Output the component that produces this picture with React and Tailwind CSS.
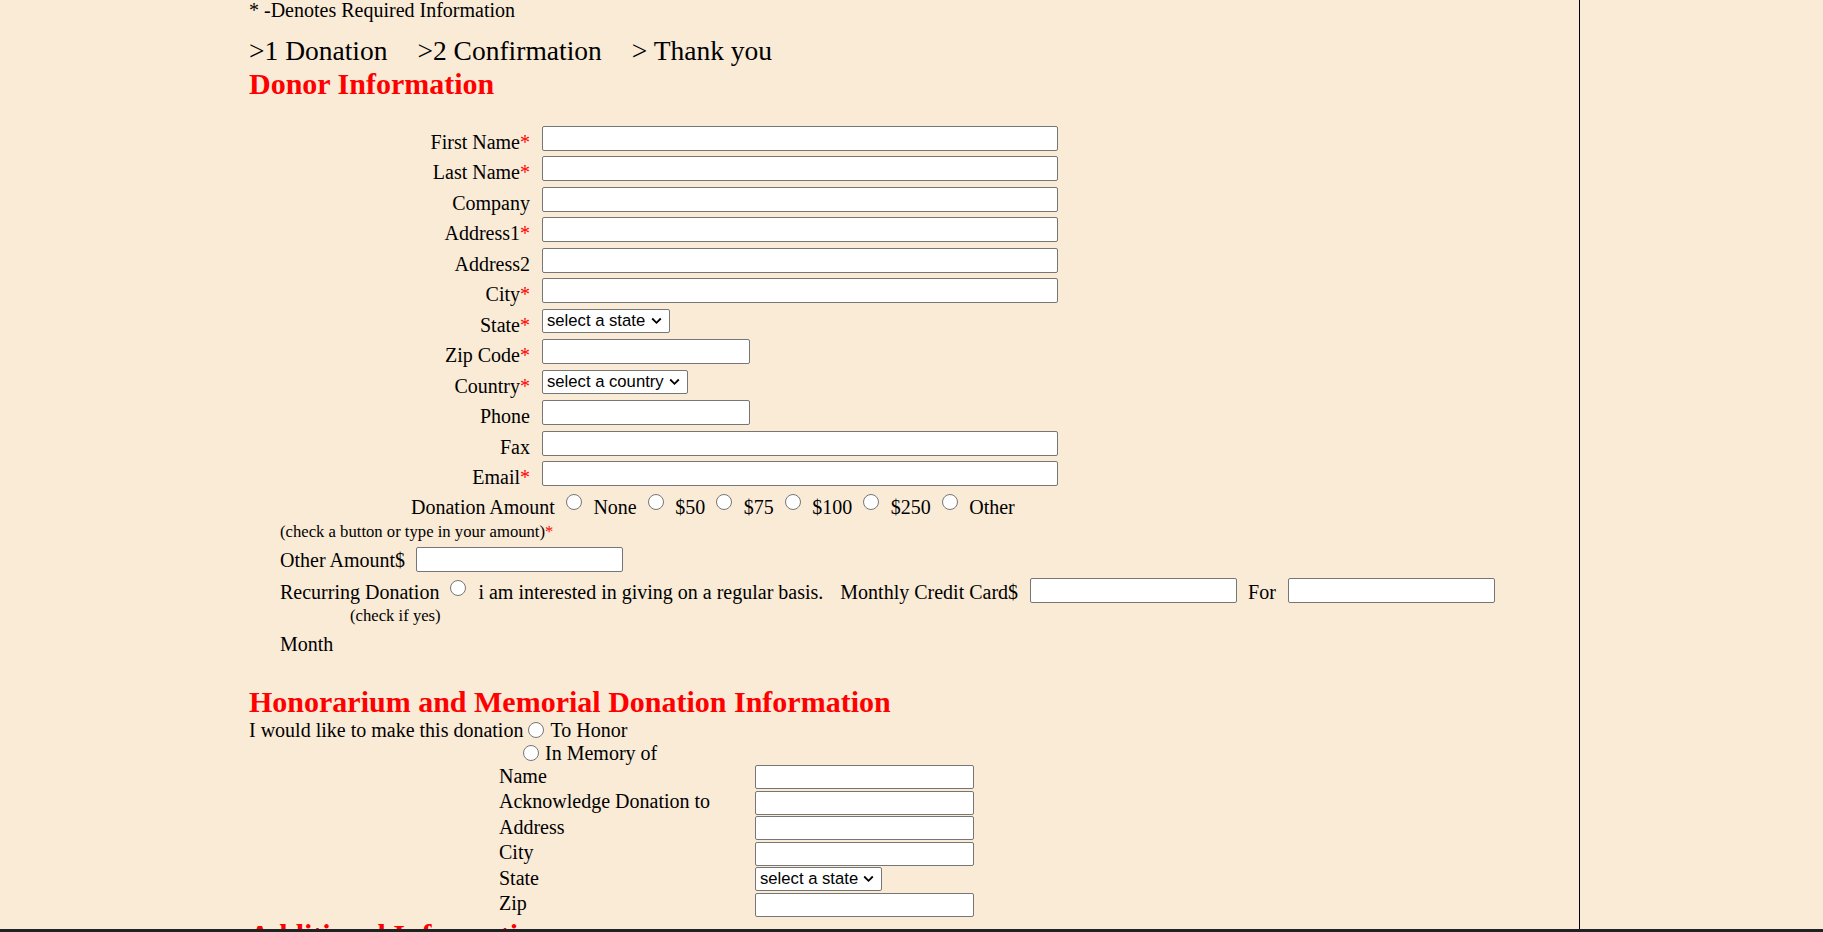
import React from 'react';

const Req = () => <span className="text-[#ff0000]">*</span>;

const Radio = ({ className = '' }) => (
  <span className={`inline-block w-[16px] h-[16px] rounded-full border border-[#767676] bg-white shrink-0 ${className}`} />
);

const TextBox = ({ w, h = 'h-[25px]', className = '' }) => (
  <input type="text" className={`${w} ${h} border border-[#767676] rounded-[2px] bg-white shrink-0 outline-none ${className}`} />
);

const Select = ({ label, w, h = 'h-[24px]' }) => (
  <div className={`${w} ${h} inline-flex items-center justify-between border border-[#767676] rounded-[2px] bg-white pl-[4px] pr-[7px] font-['Liberation_Sans',Arial,sans-serif] text-[16.67px] leading-[20px] text-black shrink-0`}>
    <span>{label}</span>
    <svg width="11" height="8" viewBox="0 0 11 8" className="shrink-0">
      <path d="M1.2 1.5 L5.5 5.8 L9.8 1.5" fill="none" stroke="#000" strokeWidth="1.8" />
    </svg>
  </div>
);

const donorRows = [
  { label: 'First Name', req: true, w: 'w-[516px]' },
  { label: 'Last Name', req: true, w: 'w-[516px]' },
  { label: 'Company', w: 'w-[516px]' },
  { label: 'Address1', req: true, w: 'w-[516px]' },
  { label: 'Address2', w: 'w-[516px]' },
  { label: 'City', req: true, w: 'w-[516px]' },
  { label: 'State', req: true, select: 'select a state', w: 'w-[128px]' },
  { label: 'Zip Code', req: true, w: 'w-[208px]' },
  { label: 'Country', req: true, select: 'select a country', w: 'w-[146px]' },
  { label: 'Phone', w: 'w-[208px]' },
  { label: 'Fax', w: 'w-[516px]' },
  { label: 'Email', req: true, w: 'w-[516px]' },
];

const amounts = ['None', '$50', '$75', '$100', '$250', 'Other'];

const honorRows = [
  { label: 'Name' },
  { label: 'Acknowledge Donation to' },
  { label: 'Address' },
  { label: 'City' },
  { label: 'State', select: 'select a state' },
  { label: 'Zip' },
];

export default function App() {
  return (
    <div className="h-[932px] w-[1823px] overflow-hidden flex flex-col bg-[#faebd7] font-['Liberation_Serif','Times_New_Roman',serif] text-[20px] text-black">
      <div className="flex-1 min-h-0 flex overflow-hidden">
        <div className="w-[1580px] shrink-0 border-r border-black pl-[249px]">
          <div className="leading-[20px]">* -Denotes Required Information</div>
          <div className="mt-[15px] text-[27.5px] leading-[32px] flex whitespace-nowrap">
            <span>&gt;1 Donation</span>
            <span className="ml-[30px]">&gt;2 Confirmation</span>
            <span className="ml-[30px]">&gt; Thank you</span>
          </div>
          <h2 className="text-[30px] leading-[34px] font-bold text-[#ff0000]">Donor Information</h2>

          <div className="mt-[22px] flex flex-col">
            {donorRows.map((r) => (
              <div key={r.label} className="flex items-center h-[30.5px]">
                <div className="w-[281px] text-right leading-[23px] pt-[8px] whitespace-nowrap">
                  {r.label}
                  {r.req && <Req />}
                </div>
                <div className="ml-[12px] flex items-center">
                  {r.select ? <Select label={r.select} w={r.w} /> : <TextBox w={r.w} />}
                </div>
              </div>
            ))}
          </div>

          <div className="mt-[5.5px] pl-[162px] flex items-start leading-[23px] whitespace-nowrap">
            <span className="pt-[1px]">Donation Amount</span>
            {amounts.map((a) => (
              <React.Fragment key={a}>
                <Radio className="ml-[11px] -mt-[0.5px]" />
                <span className="ml-[11.5px] pt-[1px]">{a}</span>
              </React.Fragment>
            ))}
          </div>

          <div className="mt-[3px] pl-[31px] text-[16.67px] leading-[20px]">
            (check a button or type in your amount)
            <Req />
          </div>

          <div className="mt-[5px] pl-[31px] flex items-center h-[25px] gap-[11px] leading-[23px]">
            <span className="pt-[2px]">Other Amount$</span>
            <TextBox w="w-[207px]" />
          </div>

          <div className="mt-[6px] pl-[31px] flex items-center h-[25px] leading-[23px] whitespace-nowrap">
            <span className="pt-[4px]">Recurring Donation</span>
            <Radio className="ml-[11px] self-start mt-[2px]" />
            <span className="ml-[12px] pt-[4px]">i am interested in giving on a regular basis.</span>
            <span className="ml-[17px] pt-[4px]">Monthly Credit Card$</span>
            <TextBox w="w-[207px]" className="ml-[12px]" />
            <span className="ml-[11px] pt-[4px]">For</span>
            <TextBox w="w-[207px]" className="ml-[12px]" />
          </div>

          <div className="mt-[3px] pl-[101px] text-[16.67px] leading-[20px]">(check if yes)</div>

          <div className="mt-[7px] pl-[31px] leading-[23px]">Month</div>

          <h2 className="mt-[29px] text-[30px] leading-[34px] font-bold text-[#ff0000] whitespace-nowrap">
            Honorarium and Memorial Donation Information
          </h2>

          <div className="flex items-start leading-[23px] whitespace-nowrap">
            <span>I would like to make this donation</span>
            <Radio className="ml-[5px] mt-[3px]" />
            <span className="ml-[6px]">To Honor</span>
          </div>
          <div className="flex items-start leading-[23px] pl-[274px] whitespace-nowrap">
            <Radio className="mt-[3px]" />
            <span className="ml-[6px]">In Memory of</span>
          </div>

          <div className="flex flex-col pl-[250px]">
            {honorRows.map((r) => (
              <div key={r.label} className="flex items-center h-[25.5px]">
                <div className="w-[256px] self-start leading-[23px] whitespace-nowrap">{r.label}</div>
                {r.select ? (
                  <Select label={r.select} w="w-[127px]" />
                ) : (
                  <TextBox w="w-[219px]" h="h-[24px]" />
                )}
              </div>
            ))}
          </div>

          <h2 className="text-[30px] leading-[34px] font-bold text-[#ff0000] whitespace-nowrap">Additional Information</h2>
        </div>
        <div className="flex-1" />
      </div>
      <div className="h-[3px] shrink-0 bg-[#202124]" />
    </div>
  );
}
